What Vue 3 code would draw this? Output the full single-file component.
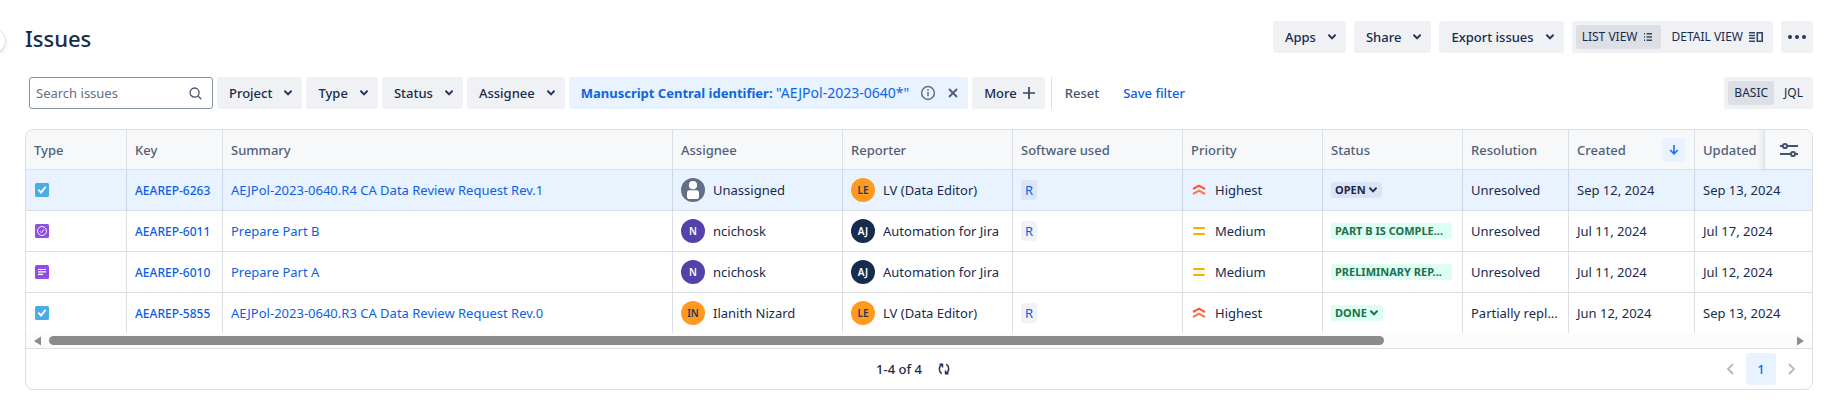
<script setup>
import { ref } from 'vue'

const search = ref('')
const actions = ['Apps', 'Share', 'Export issues']
const filters = ['Project', 'Type', 'Status', 'Assignee']

const columns = [
  { id: 'type', label: 'Type' },
  { id: 'key', label: 'Key' },
  { id: 'summary', label: 'Summary' },
  { id: 'assignee', label: 'Assignee' },
  { id: 'reporter', label: 'Reporter' },
  { id: 'software', label: 'Software used' },
  { id: 'priority', label: 'Priority' },
  { id: 'status', label: 'Status' },
  { id: 'resolution', label: 'Resolution' },
  { id: 'created', label: 'Created' },
  { id: 'updated', label: 'Updated' },
]

const nobody = { name: 'Unassigned', initials: '', tone: 'grey' }
const nc = { name: 'ncichosk', initials: 'N', tone: 'purple' }
const ilanith = { name: 'Ilanith Nizard', initials: 'IN', tone: 'orange' }
const lv = { name: 'LV (Data Editor)', initials: 'LE', tone: 'orange' }
const bot = { name: 'Automation for Jira', initials: 'AJ', tone: 'navy' }

const issues = [
  { type: 'task', key: 'AEAREP-6263', summary: 'AEJPol-2023-0640.R4 CA Data Review Request Rev.1', assignee: nobody, reporter: lv, software: 'R', priority: 'Highest', status: 'OPEN', tone: 'todo', resolution: 'Unresolved', created: 'Sep 12, 2024', updated: 'Sep 13, 2024' },
  { type: 'check', key: 'AEAREP-6011', summary: 'Prepare Part B', assignee: nc, reporter: bot, software: 'R', priority: 'Medium', status: 'PART B IS COMPLE...', tone: 'done', long: true, resolution: 'Unresolved', created: 'Jul 11, 2024', updated: 'Jul 17, 2024' },
  { type: 'text', key: 'AEAREP-6010', summary: 'Prepare Part A', assignee: nc, reporter: bot, software: '', priority: 'Medium', status: 'PRELIMINARY REP...', tone: 'done', long: true, resolution: 'Unresolved', created: 'Jul 11, 2024', updated: 'Jul 12, 2024' },
  { type: 'task', key: 'AEAREP-5855', summary: 'AEJPol-2023-0640.R3 CA Data Review Request Rev.0', assignee: ilanith, reporter: lv, software: 'R', priority: 'Highest', status: 'DONE', tone: 'done', resolution: 'Partially repl...', created: 'Jun 12, 2024', updated: 'Sep 13, 2024' },
]
</script>

<template>
  <main class="page">
    <span class="nav-handle" aria-hidden="true"></span>

    <header class="bar top">
      <h1>Issues</h1>
      <div class="actions">
        <button v-for="a in actions" :key="a" type="button" class="btn">
          {{ a }}
          <svg class="chev" viewBox="0 0 10 8"><path d="M2 2.2 5 5.4 8 2.2" /></svg>
        </button>
        <div class="toggle">
          <button type="button" class="seg on">
            LIST VIEW
            <svg width="12" height="10" viewBox="0 0 12 10" fill="#344563"><path d="M1 1h1v1.400H1zM3.500 1H9v1.400H3.500zM1 4.300h1v1.400H1zM3.500 4.300H9v1.400H3.500zM1 7.600h1V9H1zM3.500 7.600H9V9H3.500z" /></svg>
          </button>
          <button type="button" class="seg">
            DETAIL VIEW
            <svg width="14" height="12" viewBox="0 0 14 12" fill="#344563"><path d="M0 1h6v1.500H0zM0 3.800h6v1.500H0zM0 6.600h6v1.500H0zM0 9.400h6v1.500H0z" /><path d="M8.300 1.800h4.900v8.400H8.300z" fill="none" stroke="#344563" stroke-width="1.600" /></svg>
          </button>
        </div>
        <button type="button" class="btn icon" aria-label="More actions">
          <svg width="20" height="8" viewBox="0 0 20 8" fill="#253858"><circle cx="3" cy="4" r="2" /><circle cx="10" cy="4" r="2" /><circle cx="17" cy="4" r="2" /></svg>
        </button>
      </div>
    </header>

    <div class="bar filters">
      <div class="search">
        <input v-model="search" type="text" placeholder="Search issues" aria-label="Search issues" />
        <svg width="13" height="13" viewBox="0 0 14 14" fill="none" stroke="#44546f" stroke-width="1.400"><circle cx="6" cy="6" r="4.900" /><path d="m9.600 9.600 3.600 3.600" /></svg>
      </div>
      <button v-for="f in filters" :key="f" type="button" class="btn">
        {{ f }}
        <svg class="chev" viewBox="0 0 10 8"><path d="M2 2.200 5 5.400 8 2.200" /></svg>
      </button>
      <div class="chip">
        <button type="button" class="plain"><b>Manuscript Central identifier:</b> <span class="value">"AEJPol-2023-0640*"</span></button>
        <button type="button" class="plain" aria-label="Info">
          <svg width="16" height="16" viewBox="0 0 16 16" fill="none" stroke="#626f86" stroke-width="1.500"><circle cx="8" cy="8" r="6.400" /><path d="M8 7v4.200M8 4.300v1.600" /></svg>
        </button>
        <button type="button" class="plain" aria-label="Clear">
          <svg width="12" height="10" viewBox="0 0 12 10" fill="none" stroke="#505f79" stroke-width="1.900"><path d="m2 1 8 8M10 1 2 9" /></svg>
        </button>
      </div>
      <button type="button" class="btn more">
        More
        <svg width="12" height="12" viewBox="0 0 12 12" fill="none" stroke="#344563" stroke-width="1.700"><path d="M6 0v12M0 6h12" /></svg>
      </button>
      <span class="rule"></span>
      <button type="button" class="text">Reset</button>
      <button type="button" class="text save">Save filter</button>
      <div class="toggle modes">
        <button type="button" class="seg on">BASIC</button>
        <button type="button" class="seg">JQL</button>
      </div>
    </div>

    <section class="panel">
      <div class="viewport">
        <table>
          <colgroup><col v-for="c in columns" :key="c.id" :class="'c-' + c.id" /></colgroup>
          <thead>
            <tr>
              <th v-for="c in columns" :key="c.id" scope="col">
                <div class="head">
                  {{ c.label }}
                  <button v-if="c.id === 'created'" type="button" class="sort" aria-label="Sorted descending">
                    <svg width="10" height="10" viewBox="0 0 10 10" fill="none" stroke="#1d6ef0" stroke-width="1.600"><path d="M5 0v8.500M1.200 5 5 8.800 8.800 5" /></svg>
                  </button>
                </div>
              </th>
            </tr>
          </thead>
          <tbody>
            <tr v-for="(i, n) in issues" :key="i.key" :class="{ selected: n === 0 }">
              <td>
                <svg class="kind" width="14" height="14" viewBox="0 0 14 14" fill="none" stroke="#fff">
                  <rect width="14" height="14" rx="1.500" stroke="none" :fill="i.type === 'task' ? '#4bade8' : '#904ee2'" />
                  <path v-if="i.type === 'task'" d="m3.800 7.200 2.200 2.300 4.200-5.100" stroke-width="1.900" stroke-linecap="round" />
                  <g v-else-if="i.type === 'check'" stroke-width="0.900"><circle cx="7" cy="7" r="4.500" /><path d="m5.200 7.400 1.200 1.300L9 5.400" /></g>
                  <path v-else d="M3 4.500h8M3 6.900h8M3 9.300h5" stroke-width="1.200" />
                </svg>
              </td>
              <td><a href="#" class="key">{{ i.key }}</a></td>
              <td><a href="#">{{ i.summary }}</a></td>
              <td v-for="role in ['assignee', 'reporter']" :key="role">
                <div class="person">
                  <span class="avatar" :class="i[role].tone">
                    <template v-if="i[role].initials">{{ i[role].initials }}</template>
                    <svg v-else width="24" height="24" viewBox="0 0 24 24" fill="#fff"><circle cx="12" cy="7.200" r="4.100" /><rect x="6" y="12.200" width="12" height="8.800" rx="2.600" /></svg>
                  </span>
                  {{ i[role].name }}
                </div>
              </td>
              <td><a v-if="i.software" href="#" class="tag">{{ i.software }}</a></td>
              <td>
                <div class="priority">
                  <svg width="16" height="16" viewBox="0 0 16 16" fill="none" stroke-width="2">
                    <template v-if="i.priority === 'Highest'">
                      <path stroke="#ff5630" d="m2 7 6-3.300L14 7" />
                      <path stroke="#ff7452" d="m2 12 6-3.300 6 3.300" />
                    </template>
                    <path v-else stroke="#ffab00" stroke-linecap="round" d="M3 5h10M3 11h10" />
                  </svg>
                  {{ i.priority }}
                </div>
              </td>
              <td>
                <button type="button" class="status" :class="[i.tone, { long: i.long }]">
                  {{ i.status }}
                  <svg v-if="!i.long" class="chev" viewBox="0 0 10 8"><path d="M2 2.200 5 5.400 8 2.200" /></svg>
                </button>
              </td>
              <td>{{ i.resolution }}</td>
              <td>{{ i.created }}</td>
              <td>{{ i.updated }}</td>
            </tr>
          </tbody>
        </table>
        <button type="button" class="config" aria-label="Configure columns">
          <svg width="18" height="16" viewBox="0 0 18 16" fill="none" stroke="#44546f" stroke-width="2"><path d="M0 4h3M7.500 4H18M0 12h10.500M15 12h3" /><circle cx="5" cy="4" r="2.100" /><circle cx="13" cy="12" r="2.100" /></svg>
        </button>
      </div>
      <div class="scroll" aria-hidden="true">
        <svg width="7" height="10" viewBox="0 0 7 10"><path d="M7 .5v9L0 5z" fill="#8b8b8b" /></svg>
        <div class="track"><div class="thumb"></div></div>
        <svg width="7" height="10" viewBox="0 0 7 10"><path d="M0 .5v9L7 5z" fill="#8b8b8b" /></svg>
      </div>
      <footer>
        <div class="count">
          1-4 of 4
          <button type="button" class="plain" aria-label="Refresh">
            <svg width="12" height="12" viewBox="0 0 12 12" fill="none" stroke="#253858" stroke-width="1.500"><path d="M5 1.200H1.500M4.500 1v3.500M4 1.500C.5 3.500.5 8.500 3.700 10.800M7 10.800h3.500M7.500 11V7.500M8 10.500c3.500-2 3.500-7 .3-9.300" /></svg>
          </button>
        </div>
        <nav class="pager" aria-label="Pagination">
          <button type="button" aria-label="Previous"><svg width="8" height="12" viewBox="0 0 8 12"><path d="M7 1 2 6l5 5" /></svg></button>
          <button type="button" class="current">1</button>
          <button type="button" aria-label="Next"><svg width="8" height="12" viewBox="0 0 8 12"><path d="m1 1 5 5-5 5" /></svg></button>
        </nav>
      </footer>
    </section>
  </main>
</template>

<style scoped>
.page {
  position: relative;
  padding: 21px 28px 13px 25px;
  font: 400 13px/20px "Noto Sans", "Open Sans", sans-serif;
  color: #172b4d;
  overflow: hidden;
}
.page * { box-sizing: border-box; }
svg { display: block; flex: none; }
button {
  margin: 0;
  padding: 0;
  border: 0;
  background: none;
  font: inherit;
  color: inherit;
  white-space: nowrap;
}
a { color: #0c5fe4; text-decoration: none; }

.nav-handle {
  position: absolute;
  left: -19px;
  top: 29px;
  width: 24px;
  height: 24px;
  border-radius: 50%;
  background: #fff;
  box-shadow: 0 0 0 1px rgba(9, 30, 66, 0.08), 0 2px 4px 1px rgba(9, 30, 66, 0.1);
}

.bar { display: flex; align-items: center; }
h1 { margin: 2px 0 0; font-size: 22px; line-height: 28px; font-weight: 500; }
.actions { display: flex; gap: 8px; margin-left: auto; }

.btn {
  display: flex;
  align-items: center;
  justify-content: space-between;
  gap: 11px;
  height: 32px;
  padding: 0 9px 0 12px;
  border-radius: 3px;
  background: #f0f1f4;
  font-weight: 500;
}
.chev { width: 10px; height: 8px; fill: none; stroke: #253858; stroke-width: 2; stroke-linecap: round; stroke-linejoin: round; }
.btn.icon { width: 32px; padding: 0; justify-content: center; }
.btn.more { gap: 6px; padding: 0 10px 0 12px; }

.toggle { display: flex; gap: 4px; height: 32px; padding: 4px; border-radius: 3px; background: #f0f1f4; }
.seg { display: flex; align-items: center; gap: 6px; height: 24px; padding: 0 6px; border-radius: 3px; font-size: 12px; }
.seg.on { background: #dcdfe4; }
.modes { margin-left: auto; }

.filters { gap: 4px; margin-top: 24px; padding-left: 4px; }
.search {
  display: flex;
  align-items: center;
  width: 184px;
  height: 32px;
  padding: 0 10px 0 6px;
  border: 1px solid #8590a2;
  border-radius: 3px;
}
.search input {
  flex: 1;
  min-width: 0;
  padding: 0;
  border: 0;
  outline: 0;
  background: none;
  font: inherit;
  color: inherit;
}
.search input::placeholder { color: #626f86; opacity: 1; }
.chip {
  display: flex;
  align-items: center;
  gap: 11px;
  height: 32px;
  padding: 0 9px 0 12px;
  border-radius: 3px;
  background: #e9f2ff;
  color: #0c66e4;
}
.chip b { font-weight: 700; }
.value { font-size: 14px; }
.rule { width: 1px; height: 32px; margin-left: 2px; background: #dcdfe4; }
.text { margin-left: 9px; font-weight: 500; color: #44546f; }
.save { margin-left: 20px; color: #0c5fe4; }

.panel { margin-top: 20px; border: 1px solid #dcdfe4; border-radius: 8px; overflow: hidden; }
.viewport { position: relative; overflow: hidden; }
table { width: 100%; border-collapse: separate; border-spacing: 0; table-layout: fixed; }
.c-type { width: 101px; }
.c-key { width: 96px; }
.c-assignee, .c-reporter, .c-software { width: 170px; }
.c-priority, .c-status { width: 140px; }
.c-resolution { width: 106px; }
.c-created { width: 126px; }
.c-updated { width: 117px; }
th, td {
  height: 41px;
  padding: 0 8px;
  border-right: 1px solid #dcdfe4;
  border-bottom: 1px solid #dcdfe4;
  text-align: left;
  white-space: nowrap;
}
th { height: 40px; background: #f7f8f9; color: #505f79; font-weight: 500; }
th:last-child, td:last-child { border-right: 0; }
tbody tr:last-child td { height: 40px; border-bottom: 0; }
.selected td { background: #e9f2ff; border-right-color: #c9d6e8; }
.head { display: flex; align-items: center; justify-content: space-between; }
.sort { display: grid; place-items: center; width: 24px; height: 24px; border-radius: 3px; background: #e9f2ff; }
.config {
  position: absolute;
  top: 0;
  right: 0;
  display: grid;
  place-items: center;
  width: 48px;
  height: 39px;
  border-left: 1px solid #dcdfe4;
  background: #f7f8f9;
  box-shadow: -3px 0 5px rgba(9, 30, 66, 0.08);
}
.kind { margin-left: 1px; }
.key { font-size: 12px; font-weight: 500; }
.person { display: flex; align-items: center; gap: 8px; }
.avatar {
  display: grid;
  place-items: center;
  width: 24px;
  height: 24px;
  border-radius: 50%;
  color: #fff;
  font-size: 10px;
  font-weight: 600;
}
.grey { background: #626f86; }
.purple { background: #5243aa; }
.navy { background: #172b4d; }
.orange { background: #ff991f; color: #253858; }
.tag { display: inline-block; padding: 0 4px; border-radius: 3px; background: rgba(9, 30, 66, 0.06); }
.priority { display: flex; align-items: center; gap: 8px; }
.status {
  display: flex;
  align-items: center;
  gap: 2px;
  height: 16px;
  padding: 0 4px;
  border-radius: 3px;
  font-size: 11px;
  line-height: 16px;
  font-weight: 700;
}
.status.long { width: 121px; }
.todo { background: #dbe4f2; }
.done { background: #dcfff1; color: #216e4e; }
.done .chev { stroke: #216e4e; }

.scroll { display: flex; align-items: center; gap: 8px; height: 15px; padding: 0 8px; background: #fcfcfc; }
.track { flex: 1; }
.thumb { width: 76.7%; height: 9px; border-radius: 5px; background: #8b8b8b; }
footer {
  display: grid;
  grid-template-columns: 1fr auto 1fr;
  align-items: center;
  height: 41px;
  border-top: 1px solid #dcdfe4;
}
.count { display: flex; grid-column: 2; align-items: center; gap: 16px; padding-right: 12px; font-weight: 500; }
.pager { display: flex; justify-content: flex-end; padding-right: 4px; }
.pager button { display: grid; place-items: center; width: 32px; height: 32px; border-radius: 3px; }
.pager .current { width: 30px; background: #e9f2ff; color: #0c66e4; font-weight: 500; }
.pager path { fill: none; stroke: #b3b9c4; stroke-width: 1.8; }
</style>

<style>
body { background: #fff; }
</style>
